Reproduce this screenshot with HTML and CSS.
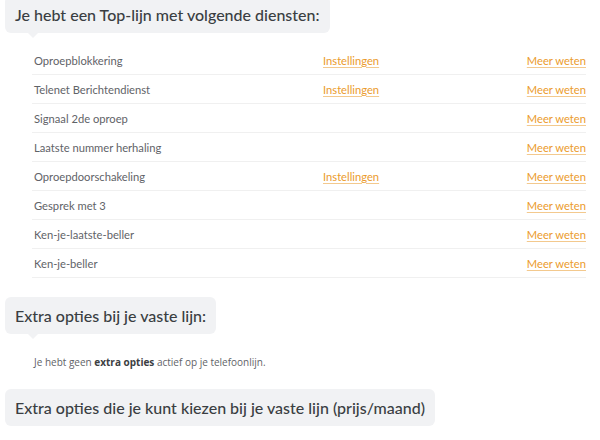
FILE: index.html
```html
<!DOCTYPE html>
<html lang="nl">
<head>
<meta charset="utf-8">
<link rel="stylesheet" href="styles.css">
</head>
<body>
<div class="page">
  <h2 class="bubble first">Je hebt een Top-lijn met volgende diensten:</h2>
  <ul class="services">
    <li class="row"><span class="name">Oproepblokkering</span><a class="set" href="#">Instellingen</a><a class="more" href="#">Meer weten</a></li>
    <li class="row"><span class="name">Telenet Berichtendienst</span><a class="set" href="#">Instellingen</a><a class="more" href="#">Meer weten</a></li>
    <li class="row"><span class="name">Signaal 2de oproep</span><span class="set"></span><a class="more" href="#">Meer weten</a></li>
    <li class="row"><span class="name">Laatste nummer herhaling</span><span class="set"></span><a class="more" href="#">Meer weten</a></li>
    <li class="row"><span class="name">Oproepdoorschakeling</span><a class="set" href="#">Instellingen</a><a class="more" href="#">Meer weten</a></li>
    <li class="row"><span class="name">Gesprek met 3</span><span class="set"></span><a class="more" href="#">Meer weten</a></li>
    <li class="row"><span class="name">Ken-je-laatste-beller</span><span class="set"></span><a class="more" href="#">Meer weten</a></li>
    <li class="row"><span class="name">Ken-je-beller</span><span class="set"></span><a class="more" href="#">Meer weten</a></li>
  </ul>
  <h2 class="bubble">Extra opties bij je vaste lijn:</h2>
  <p class="note">Je hebt geen <strong>extra opties</strong> actief op je telefoonlijn.</p>
  <h2 class="bubble">Extra opties die je kunt kiezen bij je vaste lijn (prijs/maand)</h2>
</div>
</body>
</html>
```

FILE: styles.css
```css
html, body {
  margin: 0;
  padding: 0;
  background: #ffffff;
}
.page {
  font-family: "Lato", "Liberation Sans", sans-serif;
  color: #5d6166;
  display: flex;
  flex-direction: column;
  align-items: flex-start;
  padding: 0 14px 0 5px;
  margin-top: -4px;
}
.bubble {
  position: relative;
  margin: 0;
  background: #f1f2f4;
  border-radius: 6px;
  padding: 9px 10px 9px 10px;
  font-family: "Lato", "Liberation Sans", sans-serif;
  font-weight: 500;
  font-size: 16px;
  line-height: 19px;
  color: #3a3e42;
}
.bubble::after {
  content: "";
  position: absolute;
  left: 23px;
  bottom: -5px;
  border-left: 5px solid transparent;
  border-right: 5px solid transparent;
  border-top: 5px solid #f1f2f4;
}
.services {
  list-style: none;
  margin: 12px 0 0 27px;
  padding: 0;
  align-self: stretch;
}
.row {
  display: grid;
  grid-template-columns: 289px 1fr auto;
  align-items: center;
  height: 28px;
  border-bottom: 1px solid #f0f0f0;
  font-size: 11.2px;
  padding-left: 2px;
}
.row:first-child {
  margin-top: 1px;
}
.name {
  color: #5f6368;
}
.set, .more {
  color: #eb9b2d;
  text-decoration: underline;
  text-decoration-color: #f3c98e;
  text-underline-offset: 2px;
}
.more {
  justify-self: end;
}
.services + .bubble {
  margin-top: 19px;
}
.note {
  margin: 21px 0 0 29px;
  font-family: "Open Sans", "Liberation Sans", sans-serif;
  font-size: 10px;
  color: #5f6368;
}
.note strong {
  color: #3c4043;
}
.note + .bubble {
  margin-top: 20px;
}
```
